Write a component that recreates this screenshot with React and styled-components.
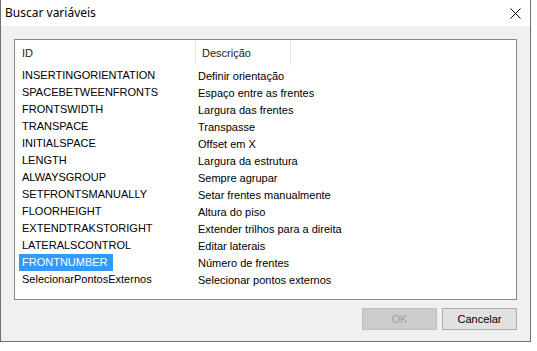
import React from 'react';
import styled, { createGlobalStyle } from 'styled-components';

const GlobalStyle = createGlobalStyle`
  html, body {
    margin: 0;
    padding: 0;
    background: #ffffff;
  }
`;

const Window = styled.div`
  box-sizing: border-box;
  width: 531px;
  height: 342px;
  display: flex;
  flex-direction: column;
  border: 1px solid #6f6f6f;
  border-top: none;
  background: #f0f0f0;
`;

const TitleBar = styled.div`
  height: 26px;
  flex: none;
  display: flex;
  align-items: center;
  justify-content: space-between;
  background: #ffffff;
  padding-left: 4px;
  font-family: 'Segoe UI', 'Noto Sans', sans-serif;
  font-size: 12px;
  color: #000;
`;

const Title = styled.span`
  margin-top: -1px;
`;

const CloseButton = styled.button`
  width: 30px;
  height: 26px;
  padding: 0;
  margin-right: 0;
  border: none;
  background: transparent;
  display: flex;
  align-items: center;
  justify-content: center;
`;

const Body = styled.div`
  flex: 1;
  display: flex;
  flex-direction: column;
  padding: 13px 13px 0 13px;
`;

const ListBox = styled.div`
  box-sizing: border-box;
  height: 261px;
  border: 1px solid #828790;
  background: #ffffff;
  font-family: 'Liberation Sans', Arial, sans-serif;
  font-size: 11px;
  color: #000;
`;

const Header = styled.div`
  display: grid;
  grid-template-columns: 181px 95px;
  height: 25px;
`;

const HeaderCell = styled.div`
  display: flex;
  align-items: center;
  padding-left: ${(p) => p.$pad}px;
  border-right: 1px solid #e5e5e5;
  color: #1a1a1a;
`;

const Rows = styled.div`
  margin-top: 2px;
  display: flex;
  flex-direction: column;
`;

const Row = styled.div`
  display: grid;
  grid-template-columns: 183px 1fr;
  height: 17px;
  align-items: center;
`;

const IdCell = styled.div`
  padding-left: 4px;
`;

const Label = styled.span`
  display: inline-block;
  height: 17px;
  line-height: 17px;
  padding: 0 5px 0 3px;
  background: ${(p) => (p.$selected ? '#3399ff' : 'transparent')};
  color: ${(p) => (p.$selected ? '#ffffff' : '#000000')};
`;

const DescCell = styled.div`
  white-space: nowrap;
`;

const Footer = styled.div`
  display: flex;
  justify-content: flex-end;
  gap: 5px;
  margin-top: 8px;
`;

const Button = styled.button`
  box-sizing: border-box;
  width: 75px;
  height: 22px;
  padding: 0;
  border: 1px solid ${(p) => (p.disabled ? '#bfbfbf' : '#adadad')};
  background: ${(p) => (p.disabled ? '#cccccc' : '#e1e1e1')};
  color: ${(p) => (p.disabled ? '#a0a0a0' : '#000000')};
  font-family: 'Liberation Sans', Arial, sans-serif;
  font-size: 11px;
`;

const rows = [
  ['INSERTINGORIENTATION', 'Definir orientação'],
  ['SPACEBETWEENFRONTS', 'Espaço entre as frentes'],
  ['FRONTSWIDTH', 'Largura das frentes'],
  ['TRANSPACE', 'Transpasse'],
  ['INITIALSPACE', 'Offset em X'],
  ['LENGTH', 'Largura da estrutura'],
  ['ALWAYSGROUP', 'Sempre agrupar'],
  ['SETFRONTSMANUALLY', 'Setar frentes manualmente'],
  ['FLOORHEIGHT', 'Altura do piso'],
  ['EXTENDTRAKSTORIGHT', 'Extender trilhos para a direita'],
  ['LATERALSCONTROL', 'Editar laterais'],
  ['FRONTNUMBER', 'Número de frentes'],
  ['SelecionarPontosExternos', 'Selecionar pontos externos'],
];

export default function App() {
  return (
    <>
      <GlobalStyle />
      <Window>
        <TitleBar>
          <Title>Buscar variáveis</Title>
          <CloseButton>
            <svg width="11" height="11" viewBox="0 0 11 11">
              <path d="M0.5 0.5 L10.5 10.5 M10.5 0.5 L0.5 10.5" stroke="#000" strokeWidth="1" />
            </svg>
          </CloseButton>
        </TitleBar>
        <Body>
          <ListBox>
            <Header>
              <HeaderCell $pad={7}>ID</HeaderCell>
              <HeaderCell $pad={6}>Descrição</HeaderCell>
            </Header>
            <Rows>
              {rows.map(([id, desc]) => (
                <Row key={id}>
                  <IdCell>
                    <Label $selected={id === 'FRONTNUMBER'}>{id}</Label>
                  </IdCell>
                  <DescCell>{desc}</DescCell>
                </Row>
              ))}
            </Rows>
          </ListBox>
          <Footer>
            <Button disabled>OK</Button>
            <Button>Cancelar</Button>
          </Footer>
        </Body>
      </Window>
    </>
  );
}
